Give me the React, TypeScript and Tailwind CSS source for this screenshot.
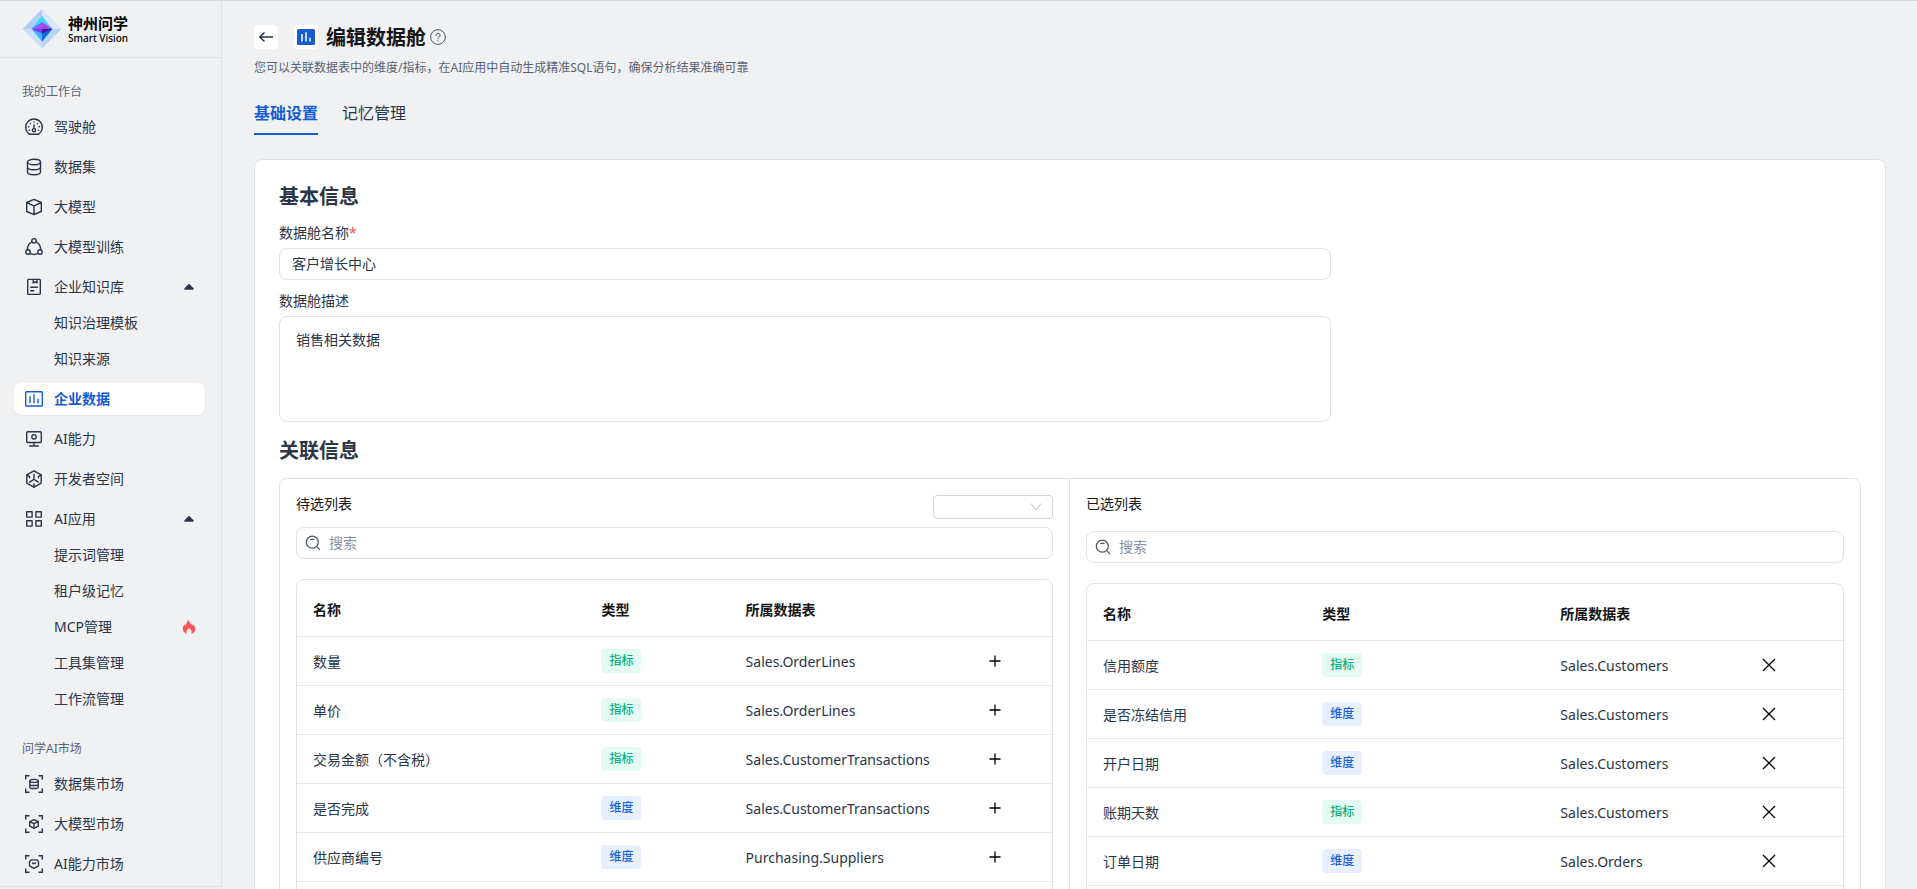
import { useState, type ReactNode } from 'react';

type FieldKind = 'metric' | 'dimension';

interface Field {
  name: string;
  kind: FieldKind;
  table: string;
}

interface NavChild {
  label: string;
  hot?: boolean;
}

interface NavItem {
  label: string;
  icon: ReactNode;
  active?: boolean;
  children?: NavChild[];
}

const CANDIDATES: Field[] = [
  { name: '数量', kind: 'metric', table: 'Sales.OrderLines' },
  { name: '单价', kind: 'metric', table: 'Sales.OrderLines' },
  { name: '交易金额（不含税）', kind: 'metric', table: 'Sales.CustomerTransactions' },
  { name: '是否完成', kind: 'dimension', table: 'Sales.CustomerTransactions' },
  { name: '供应商编号', kind: 'dimension', table: 'Purchasing.Suppliers' },
];

const SELECTED: Field[] = [
  { name: '信用额度', kind: 'metric', table: 'Sales.Customers' },
  { name: '是否冻结信用', kind: 'dimension', table: 'Sales.Customers' },
  { name: '开户日期', kind: 'dimension', table: 'Sales.Customers' },
  { name: '账期天数', kind: 'metric', table: 'Sales.Customers' },
  { name: '订单日期', kind: 'dimension', table: 'Sales.Orders' },
];

/* ---------- icons ---------- */

function Glyph({ children }: { children: ReactNode }) {
  return (
    <svg
      viewBox="0 0 20 20"
      className="size-5 shrink-0"
      fill="none"
      stroke="currentColor"
      strokeWidth="1.4"
      strokeLinecap="round"
      strokeLinejoin="round"
      aria-hidden="true"
    >
      {children}
    </svg>
  );
}

const brackets = (
  <path d="M1.7 5.5V1.7h3.8M14.5 1.7h3.8v3.8M18.3 14.5v3.8h-3.8M5.5 18.3H1.7v-3.8" strokeLinecap="butt" strokeLinejoin="miter" />
);

const icons = {
  cockpit: (
    <Glyph>
      <path d="M5.6 17.3a8.3 8.3 0 1 1 8.8 0Z" />
      <circle cx="10" cy="13.2" r="1.6" />
      <path d="M10 8v3.6M10 4.9v.2M6.4 6.4l.2.2M13.6 6.4l-.2.2M4.6 9.8h.3M15.1 9.8h.3M5.2 13.2h.3M14.5 13.2h.3" />
    </Glyph>
  ),
  dataset: (
    <Glyph>
      <ellipse cx="10" cy="5" rx="6.5" ry="2.7" />
      <path d="M3.5 5v10c0 1.5 2.9 2.7 6.5 2.7s6.5-1.2 6.5-2.7V5M3.5 10c0 1.5 2.9 2.7 6.5 2.7s6.5-1.2 6.5-2.7" />
    </Glyph>
  ),
  model: (
    <Glyph>
      <path d="M10 2.4 17.3 5.5v9L10 17.6 2.7 14.5v-9ZM2.7 5.5 10 8.8l7.3-3.3M10 8.8v8.8" />
    </Glyph>
  ),
  training: (
    <Glyph>
      <circle cx="10" cy="3.8" r="2.2" />
      <circle cx="4" cy="15" r="2.2" />
      <circle cx="16" cy="15" r="2.2" />
      <path d="M7.8 4.8C5.3 6 3.4 8.6 3.3 12.8M12.2 4.8c2.5 1.2 4.4 3.8 4.5 8M6 16.4c2.5 1.3 5.5 1.3 8 0" />
    </Glyph>
  ),
  knowledge: (
    <Glyph>
      <rect x="3.7" y="2.4" width="12.6" height="15" rx=".8" />
      <path d="M9.2 2.4v3.6l1.9-1.2 1.9 1.2V2.4M6.7 10.2h6.8M6.7 13.8h3.2" />
    </Glyph>
  ),
  data: (
    <Glyph>
      <rect x="1.7" y="2.7" width="16.6" height="14.3" rx=".8" />
      <path d="M6 7.6v6.2M10 5.6v8.2M14 10.2v3.6" />
    </Glyph>
  ),
  ability: (
    <Glyph>
      <rect x="2.7" y="2.7" width="14.6" height="10.8" rx="1" />
      <circle cx="10" cy="7.8" r="2.2" />
      <path d="M10 13.5v3.5M5.6 17h8.8" />
    </Glyph>
  ),
  developer: (
    <Glyph>
      <path d="M10 1.8 17.2 5.9v8.2L10 18.2l-7.2-4.1V5.9Z" />
      <path d="M10 5.2v5.2M10 10.4l-4.4 2.7M10 10.4l4.4 2.7M2.8 5.9l2.8 1.7M17.2 5.9l-2.8 1.7M10 18.2v-3.2M5.6 7.6v1.2M14.4 7.6v1.2" />
    </Glyph>
  ),
  apps: (
    <Glyph>
      <rect x="2.7" y="2.7" width="5.4" height="5.4" />
      <rect x="11.9" y="2.7" width="5.4" height="5.4" />
      <rect x="2.7" y="11.7" width="5.4" height="5.4" />
      <rect x="11.9" y="11.7" width="5.4" height="5.4" />
    </Glyph>
  ),
  datasetMarket: (
    <Glyph>
      {brackets}
      <ellipse cx="10" cy="6.9" rx="4.2" ry="1.5" />
      <path d="M5.8 6.9v6c0 .9 1.9 1.6 4.2 1.6s4.2-.7 4.2-1.6v-6M5.8 9.9c0 .9 1.9 1.6 4.2 1.6s4.2-.7 4.2-1.6" />
    </Glyph>
  ),
  modelMarket: (
    <Glyph>
      {brackets}
      <path d="M10 5.6l4.3 2v4.6L10 14.3l-4.3-2.1V7.6ZM5.7 7.6 10 9.7l4.3-2.1M10 9.7v4.6" />
    </Glyph>
  ),
  abilityMarket: (
    <Glyph>
      {brackets}
      <path d="M6.9 5.9h6.2l1.4 1.9v4L10 14.4l-4.500-2.600v-4ZM8.600 8.900a2 2 0 0 0 2.800 0" />
    </Glyph>
  ),
};

function CaretUp() {
  return (
    <svg viewBox="0 0 12 12" className="size-3" fill="currentColor" aria-hidden="true">
      <path d="M1.3 7.5 5.4 3.300a.8.8 0 0 1 1.200 0l4.100 4.200c.5.5.2 1.200-.5 1.200H1.800c-.7 0-1-.7-.5-1.200Z" />
    </svg>
  );
}

function Flame() {
  return (
    <svg viewBox="0 0 14 14" className="size-3.5" fill="#fb5458" aria-hidden="true">
      <path d="M4.900 13.800C2.400 13 .7 11.200.7 8.600c0-1.900 1-3.200 1.900-4.400.3.800.6 1.400 1.200 1.700C3.900 3.500 5.100 1.400 7.100.1c-.1 2 .8 3 1.900 4 .5.500 1 1 1.300 1.600.4-.4.600-.8.700-1.400 1.300 1.100 2.300 2.700 2.300 4.600 0 2.400-1.600 4.200-4.100 4.900.9-1.800.5-3.500-2.100-5.700-2.700 2-3.200 3.800-2.200 5.700Z" />
    </svg>
  );
}

function SearchIcon() {
  return (
    <svg
      viewBox="0 0 16 16"
      className="size-4 shrink-0"
      fill="none"
      stroke="#4b5565"
      strokeWidth="1.2"
      strokeLinecap="round"
      aria-hidden="true"
    >
      <circle cx="7.3" cy="7.2" r="6" />
      <path d="M5.6 4.6a3 3 0 0 1 3.400 0M11.700 11.700l3 3" />
    </svg>
  );
}

function Logo() {
  return (
    <svg viewBox="0 0 40 40" className="size-10 shrink-0" aria-hidden="true">
      <path d="M20 0 39.5 20H20Z" fill="#dbe6fb" />
      <path d="M20 0 .5 20H20Z" fill="#b3cdfa" />
      <path d="M.5 20 20 39.5V20Z" fill="#cbdffc" />
      <path d="M39.5 20 20 39.5V20Z" fill="#b9d4fb" />
      <path d="M20 7 9.500 20H20Z" fill="#22e3f0" />
      <path d="M20 7 30.500 20H20Z" fill="#4fd3f8" />
      <path d="M9.500 20 20 32.500V20Z" fill="#3fb4fa" />
      <path d="M30.500 20 20 32.500V20Z" fill="#0f6ae6" />
      <path d="M9.500 20 20 13V20Z" fill="#8b5cf6" />
      <path d="M30.500 20 20 13V20Z" fill="#a445ee" />
      <path d="M9.500 20 20 24.500V20Z" fill="#8436ee" />
      <path d="M30.500 20 20 24.500V20Z" fill="#3b1a9e" />
    </svg>
  );
}

/* ---------- sidebar ---------- */

const WORKBENCH: NavItem[] = [
  { label: '驾驶舱', icon: icons.cockpit },
  { label: '数据集', icon: icons.dataset },
  { label: '大模型', icon: icons.model },
  { label: '大模型训练', icon: icons.training },
  {
    label: '企业知识库',
    icon: icons.knowledge,
    children: [{ label: '知识治理模板' }, { label: '知识来源' }],
  },
  { label: '企业数据', icon: icons.data, active: true },
  { label: 'AI能力', icon: icons.ability },
  { label: '开发者空间', icon: icons.developer },
  {
    label: 'AI应用',
    icon: icons.apps,
    children: [
      { label: '提示词管理' },
      { label: '租户级记忆' },
      { label: 'MCP管理', hot: true },
      { label: '工具集管理' },
      { label: '工作流管理' },
    ],
  },
];

const MARKET: NavItem[] = [
  { label: '数据集市场', icon: icons.datasetMarket },
  { label: '大模型市场', icon: icons.modelMarket },
  { label: 'AI能力市场', icon: icons.abilityMarket },
];

function NavSection({ title, items }: { title: string; items: NavItem[] }) {
  return (
    <section className="mt-[25px]">
      <h2 className="mb-2.5 pl-2 text-xs leading-[18px] text-[#5a6373]">{title}</h2>
      <ul className="flex flex-col gap-2">
        {items.map((item) => (
          <li key={item.label}>
            <a
              href="#"
              className={
                item.active
                  ? 'flex h-8 items-center gap-2.5 rounded-lg bg-white px-2.5 font-bold text-[#155bd4] shadow-xs'
                  : 'flex h-8 items-center gap-2.5 rounded-lg px-2.5'
              }
            >
              {item.icon}
              <span className="flex-1">{item.label}</span>
              {item.children && <CaretUp />}
            </a>
            {item.children && (
              <ul className="mt-1 flex flex-col gap-1">
                {item.children.map((child) => (
                  <li key={child.label}>
                    <a href="#" className="flex h-8 items-center justify-between pr-[9px] pl-10">
                      {child.label}
                      {child.hot && <Flame />}
                    </a>
                  </li>
                ))}
              </ul>
            )}
          </li>
        ))}
      </ul>
    </section>
  );
}

function Sidebar() {
  return (
    <aside className="flex w-[222px] shrink-0 flex-col border-r border-[#dfe1e5]">
      <div className="flex h-[57px] shrink-0 items-center gap-1.5 border-b border-[#dfe1e5] pl-[22px]">
        <Logo />
        <div className="text-black">
          <div className="text-[15px] leading-[17px] font-bold">神州问学</div>
          <div className="text-[10px] leading-3 font-medium">Smart Vision</div>
        </div>
      </div>
      <nav className="min-h-0 flex-1 overflow-hidden pr-4 pl-3.5">
        <NavSection title="我的工作台" items={WORKBENCH} />
        <NavSection title="问学AI市场" items={MARKET} />
      </nav>
      <div className="h-[3px] shrink-0 border-t border-[#dfe1e5]" />
    </aside>
  );
}

/* ---------- field lists ---------- */

function KindTag({ kind }: { kind: FieldKind }) {
  return kind === 'metric' ? (
    <span className="inline-flex h-6 items-center rounded bg-[#e5faf3] px-2 text-xs font-medium text-[#0bb07f]">指标</span>
  ) : (
    <span className="inline-flex h-6 items-center rounded bg-[#e6f0ff] px-2 text-xs font-medium text-[#1a5fd8]">维度</span>
  );
}

function SearchBox({ label }: { label: string }) {
  return (
    <label className="flex h-8 items-center gap-2 rounded-lg border border-[#e0e2e8] px-2">
      <SearchIcon />
      <input
        type="search"
        aria-label={label}
        placeholder="搜索"
        className="min-w-0 flex-1 outline-none placeholder:text-[#8a92a2]"
      />
    </label>
  );
}

function FieldTable({
  fields,
  columns,
  action,
}: {
  fields: Field[];
  columns: ReactNode;
  action: 'add' | 'remove';
}) {
  return (
    <div className="mt-5 min-h-80 rounded-t-lg border border-[#e0e2e8]">
      <table className="w-full table-fixed text-left">
        {columns}
        <thead>
          <tr className="h-14 border-b border-[#e6e8ec] text-[#161616]">
            <th className="px-4 pt-1 font-bold">名称</th>
            <th className="px-4 pt-1 font-bold">类型</th>
            <th className="px-4 pt-1 font-bold">所属数据表</th>
            <th aria-label="操作" />
          </tr>
        </thead>
        <tbody>
          {fields.map((field) => (
            <tr key={field.name} className="h-[49px] border-b border-[#e6e8ec]">
              <td className="px-4 pt-0.5">{field.name}</td>
              <td className="px-4">
                <div className="flex">
                  <KindTag kind={field.kind} />
                </div>
              </td>
              <td className="px-4 pt-0.5">{field.table}</td>
              <td className="px-4">
                <button
                  type="button"
                  aria-label={action === 'add' ? `添加${field.name}` : `移除${field.name}`}
                  className="block text-black"
                >
                  <svg viewBox="0 0 16 16" className="size-4" fill="none" stroke="currentColor" strokeWidth="1.3">
                    {action === 'add' ? <path d="M8 2.5v11M2.5 8h11" /> : <path d="m2 2 12 12M14 2 2 14" />}
                  </svg>
                </button>
              </td>
            </tr>
          ))}
        </tbody>
      </table>
    </div>
  );
}

/* ---------- page ---------- */

export default function App() {
  const [tab, setTab] = useState<'basic' | 'memory'>('basic');
  const [name, setName] = useState('客户增长中心');
  const [description, setDescription] = useState('销售相关数据');

  const tabClass = (current: boolean) =>
    current
      ? 'border-b-2 border-[#155bd4] pb-2 font-bold text-[#155bd4]'
      : 'border-b-2 border-transparent pb-2';

  return (
    <div className="flex h-screen overflow-hidden border-t border-[#d9dbdf] bg-[#f0f1f3] font-['Noto_Sans','Noto_Sans_CJK_SC',sans-serif] text-sm leading-[22px] text-[#2a3547]">
      <Sidebar />

      <main className="min-w-0 flex-1 overflow-hidden pt-6 pr-[31px] pl-8">
        <header>
          <div className="flex h-6 items-center">
            <button type="button" aria-label="返回" className="flex size-6 items-center justify-center rounded bg-white">
              <svg viewBox="0 0 16 16" className="size-4" fill="none" stroke="currentColor" strokeWidth="1.5" aria-hidden="true">
                <path d="M15 8H1.8M6.5 3.500 1.800 8l4.700 4.500" />
              </svg>
            </button>
            <span className="ml-4 flex size-6 items-center justify-center rounded bg-white">
              <svg viewBox="0 0 18 16" className="h-4 w-[18px]" aria-hidden="true">
                <rect width="18" height="16" rx="1.5" fill="#155bd4" />
                <path d="M5 5v7.500M9 3.300v9.200M13 8.800v3.700" stroke="#fff" strokeWidth="1.5" />
              </svg>
            </span>
            <h1 className="ml-2 pt-0.5 text-xl leading-6 font-bold text-[#161616]">编辑数据舱</h1>
            <svg
              viewBox="0 0 16 16"
              className="ml-1 size-4"
              fill="none"
              stroke="#4b5565"
              strokeWidth="1"
              strokeLinecap="round"
              aria-hidden="true"
            >
              <circle cx="8" cy="8" r="7.4" />
              <path d="M5.9 6.4a2.100 2.100 0 1 1 3.300 1.700C8.400 8.600 8 8.900 8 9.700M8 11.700v.2" />
            </svg>
          </div>
          <p className="mt-2 text-xs leading-[22px] text-[#5a6373]">
            您可以关联数据表中的维度/指标，在AI应用中自动生成精准SQL语句，确保分析结果准确可靠
          </p>
        </header>

        <div role="tablist" className="mt-[22px] flex gap-6 text-base leading-6">
          <button type="button" role="tab" aria-selected={tab === 'basic'} onClick={() => setTab('basic')} className={tabClass(tab === 'basic')}>
            基础设置
          </button>
          <button type="button" role="tab" aria-selected={tab === 'memory'} onClick={() => setTab('memory')} className={tabClass(tab === 'memory')}>
            记忆管理
          </button>
        </div>

        <div className="mt-6 rounded-lg border border-[#e0e2e8] bg-white p-6">
          <h2 className="text-xl leading-[26px] font-bold">基本信息</h2>
          <div className="mt-3 w-[66.5%]">
            <label htmlFor="cabin-name" className="block">
              数据舱名称<span className="text-[#fb4b4f]">*</span>
            </label>
            <input
              id="cabin-name"
              value={name}
              onChange={(e) => setName(e.target.value)}
              className="mt-1 block h-8 w-full rounded-lg border border-[#e0e2e8] px-3 pb-0.5 outline-none"
            />
            <label htmlFor="cabin-desc" className="mt-2.5 block">
              数据舱描述
            </label>
            <textarea
              id="cabin-desc"
              value={description}
              onChange={(e) => setDescription(e.target.value)}
              className="mt-1 block h-[106px] w-full resize-none rounded-lg border border-[#e0e2e8] px-4 py-3 outline-none"
            />
          </div>

          <h2 className="mt-4 text-xl leading-[26px] font-bold">关联信息</h2>
          <div className="mt-3.5 grid grid-cols-2 rounded-lg border border-[#e0e2e8]">
            <section className="border-r border-[#e0e2e8] p-4">
              <div className="mb-2 flex h-6 items-start justify-between">
                <h3 className="leading-[18px] text-[#161616]">待选列表</h3>
                <div className="relative">
                  <select aria-label="字段类型" className="block h-6 w-[120px] appearance-none rounded border border-[#d0d3d8] px-2 text-xs outline-none">
                    <option value="" />
                  </select>
                  <svg
                    viewBox="0 0 12 12"
                    className="pointer-events-none absolute top-1.5 right-[11px] size-3"
                    fill="none"
                    stroke="#bfc2c8"
                    aria-hidden="true"
                  >
                    <path d="M1 2.5 6 9l5-6.5" />
                  </svg>
                </div>
              </div>
              <SearchBox label="搜索待选列表" />
              <FieldTable
                fields={CANDIDATES}
                action="add"
                columns={
                  <colgroup>
                    <col className="w-[38.2%]" />
                    <col className="w-[19.1%]" />
                    <col className="w-[32%]" />
                    <col className="w-[10.7%]" />
                  </colgroup>
                }
              />
            </section>

            <section className="p-4">
              <div className="mb-3 flex h-6 items-start">
                <h3 className="leading-[18px] text-[#161616]">已选列表</h3>
              </div>
              <SearchBox label="搜索已选列表" />
              <FieldTable
                fields={SELECTED}
                action="remove"
                columns={
                  <colgroup>
                    <col className="w-[29%]" />
                    <col className="w-[31.5%]" />
                    <col className="w-[26.5%]" />
                    <col className="w-[13%]" />
                  </colgroup>
                }
              />
            </section>
          </div>
        </div>
      </main>
    </div>
  );
}
